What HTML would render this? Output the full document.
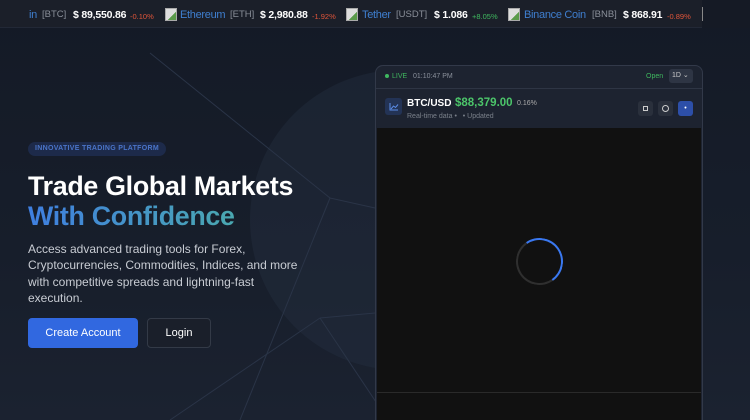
<!DOCTYPE html>
<html style="height:420px;overflow:hidden"><head><style>
*{margin:0;padding:0;box-sizing:border-box}
body{width:750px;height:420px;overflow:hidden;background:linear-gradient(180deg,#141a26 0%,#171e2b 60%,#1b2230 100%);font-family:"Liberation Sans",sans-serif;position:relative;color:#fff}
.tick{position:absolute;left:0;top:0;width:750px;height:28px;background:#1b1f29;border-bottom:1px solid #222836}
.tick .dk{position:absolute;right:0;top:0;width:48px;height:28px;background:#151a25}
.tick span{position:absolute;top:9px;white-space:nowrap;line-height:12px}
.n{color:#3f7fd0;font-size:11px;letter-spacing:-.3px}.s{color:#8a8f99;font-size:9.5px}.p{font-weight:bold;font-size:10.5px;letter-spacing:-.2px}
.r{color:#e0553a;font-size:7.5px}.g{color:#3fb85f;font-size:7.5px}
.ic{width:12px;height:13px;border:1px solid #aaa;background:linear-gradient(135deg,#ddd 60%,#5a9a4a 60%);top:8px!important}
.badge{position:absolute;left:28px;top:142px;height:14px;padding:0 7px;border-radius:7px;background:#1d2a4a;color:#4a74c8;font-size:7px;font-weight:bold;line-height:14px;letter-spacing:.3px}
h1{position:absolute;left:28px;top:171px;font-size:26.8px;line-height:30px;font-weight:bold;letter-spacing:-.3px}
h1 span{background:linear-gradient(90deg,#3f7fe0,#4aa8b0);-webkit-background-clip:text;color:transparent}
.desc{position:absolute;left:28px;top:241px;width:275px;font-size:12px;line-height:16.3px;color:#c8ccd3}
.b1{position:absolute;left:28px;top:318px;width:110px;height:30px;border-radius:4px;background:#3168e0;font-size:11px;text-align:center;line-height:30px}
.b2{position:absolute;left:147px;top:318px;width:64px;height:30px;border-radius:4px;background:#1a1f2a;border:1px solid #333a47;font-size:11px;text-align:center;line-height:28px}
.circ{position:absolute;left:250px;top:70px;width:300px;height:300px;border-radius:50%;background:rgba(40,52,70,.35)}
.panel{position:absolute;left:375px;top:65px;width:328px;height:370px;border:1px solid #323949;border-radius:8px;background:#1d2330;overflow:hidden}
.hd{height:23px;border-bottom:1px solid #2e3544;font-size:7px;color:#8a909b;position:relative}
.pr{height:39px;position:relative}
.chart{position:absolute;left:1px;top:62px;width:324px;height:310px;background:#111}
.btn{position:absolute;top:12px;width:15px;height:15px;border-radius:3px;background:#2a303c}
</style></head><body>
<div class="tick"><div class="dk"></div>
<span class="n" style="left:29px">in</span><span class="s" style="left:42px">[BTC]</span><span class="p" style="left:73px">$ 89,550.86</span><span class="r" style="left:130px;top:11px">-0.10%</span>
<span class="ic" style="left:165px"></span><span class="n" style="left:180px">Ethereum</span><span class="s" style="left:230px">[ETH]</span><span class="p" style="left:260px">$ 2,980.88</span><span class="r" style="left:312px;top:11px">-1.92%</span>
<span class="ic" style="left:346px"></span><span class="n" style="left:362px">Tether</span><span class="s" style="left:396px">[USDT]</span><span class="p" style="left:434px">$ 1.086</span><span class="g" style="left:472px;top:11px">+8.05%</span>
<span class="ic" style="left:508px"></span><span class="n" style="left:524px">Binance Coin</span><span class="s" style="left:592px">[BNB]</span><span class="p" style="left:623px">$ 868.91</span><span class="r" style="left:667px;top:11px">-0.89%</span><span style="left:702px;top:7px;width:1px;height:14px;background:#888"></span>
</div>
<div class="circ"></div>
<svg style="position:absolute;left:0;top:28px" width="750" height="392"><g stroke="#2a3447" stroke-width="1" fill="none"><line x1="150" y1="25" x2="330" y2="170"/><line x1="330" y1="170" x2="240" y2="392"/><line x1="330" y1="170" x2="375" y2="180"/><line x1="170" y1="392" x2="320" y2="290"/><line x1="320" y1="290" x2="375" y2="285"/><line x1="320" y1="290" x2="380" y2="380"/></g></svg>
<div class="badge">INNOVATIVE TRADING PLATFORM</div>
<h1>Trade Global Markets<br><span>With Confidence</span></h1>
<div class="desc">Access advanced trading tools for Forex, Cryptocurrencies, Commodities, Indices, and more with competitive spreads and lightning-fast execution.</div>
<div class="b1">Create Account</div><div class="b2">Login</div>
<div class="panel">
<div class="hd"><span style="position:absolute;left:9px;top:7px;color:#3fb85f"><span style="display:inline-block;width:4px;height:4px;border-radius:50%;background:#3fb85f;margin-right:3px"></span>LIVE</span><span style="position:absolute;left:37px;top:7px">01:10:47 PM</span>
<span style="position:absolute;left:270px;top:7px;color:#3fb85f">Open</span><span style="position:absolute;left:293px;top:3px;width:24px;height:14px;border-radius:3px;background:#2e3544;color:#ccc;line-height:14px;padding-left:3px">1D ⌄</span></div>
<div class="pr"><div style="position:absolute;left:9px;top:9px;width:17px;height:17px;border-radius:3px;background:#233355"><svg width="17" height="17"><path d="M5 5v7h8M6 11l2.5-3 2 1.5 2.5-3" stroke="#5b8de8" fill="none" stroke-width="1"/></svg></div>
<span style="position:absolute;left:31px;top:9px;font-size:10px;font-weight:bold">BTC/USD</span>
<span style="position:absolute;left:79px;top:8px;font-size:11.5px;font-weight:bold;color:#4cc56a">$88,379.00</span>
<span style="position:absolute;left:141px;top:11px;font-size:7px;color:#aaa">0.16%</span>
<span style="position:absolute;left:31px;top:24px;font-size:7px;color:#7a808a">Real-time data •&nbsp;&nbsp;&nbsp;• Updated</span>
<div class="btn" style="left:262px"><div style="width:5px;height:5px;border:1px solid #ccc;margin:5px"></div></div>
<div class="btn" style="left:282px"><div style="width:7px;height:7px;border:1px solid #ccc;border-radius:50%;margin:4px"></div></div>
<div class="btn" style="left:302px;background:#2d4fa8;color:#fff;font-size:7px;text-align:center;line-height:15px">•</div></div>
<div class="chart"><div style="position:absolute;left:139px;top:110px;width:47px;height:47px;border-radius:50%;border:2px solid #2f2f2f;border-top-color:#3a78f0;border-right-color:#3a78f0;transform:rotate(10deg)"></div>
<div style="position:absolute;left:0;top:264px;width:100%;height:1px;background:#2a2a2a"></div></div>
</div>
</body></html>
